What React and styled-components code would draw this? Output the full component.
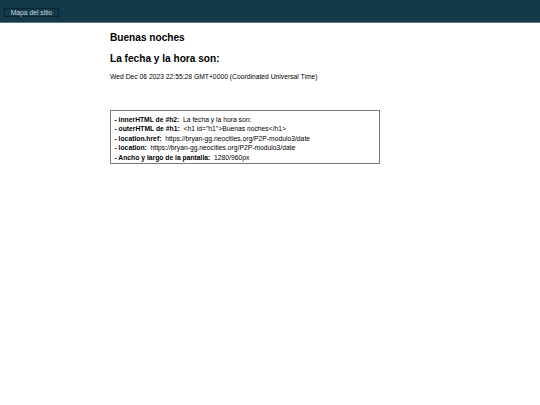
import React from 'react';
import styled, { createGlobalStyle } from 'styled-components';

const GlobalStyle = createGlobalStyle`
	html, body {
		margin: 0;
		padding: 0;
		background: #ffffff;
		font-family: 'Liberation Sans', Arial, sans-serif;
		color: #000000;
	}
`;

const Header = styled.header`
	height: 23px;
	background: #133a4b;
	border-bottom: 1px solid #5b7a85;
	display: flex;
	align-items: flex-start;
	padding: 8px 4px 0;
	box-sizing: border-box;
`;

const MapButton = styled.button`
	height: 9px;
	width: 55px;
	padding: 0;
	font-family: 'Liberation Sans', Arial, sans-serif;
	font-size: 6.75px;
	line-height: 7px;
	color: #cdd5d9;
	background: #133a4b;
	border: 1px solid #0a2430;
	border-radius: 0;
	cursor: pointer;
`;

const Main = styled.main`
	width: 320px;
	margin: 0 auto;
	padding-top: 9px;
	box-sizing: border-box;
`;

const Title = styled.h1`
	font-size: 10.125px;
	font-weight: bold;
	margin: 0;
	line-height: 12px;
`;

const Subtitle = styled.h2`
	font-size: 10.125px;
	font-weight: bold;
	margin: 8.5px 0 0;
	line-height: 12px;
`;

const DateLine = styled.p`
	font-size: 6.75px;
	margin: 8px 0 0;
	line-height: 8px;
`;

const InfoBox = styled.div`
	width: 270px;
	margin-top: 29px;
	padding: 4px 3.5px 1px;
	border: 1px solid #7a7a7a;
	box-sizing: border-box;
`;

const InfoRow = styled.div`
	font-size: 6.75px;
	line-height: 9.5px;
	white-space: nowrap;
`;

const Label = styled.strong`
	font-weight: bold;
	margin-right: 3.8px;
`;

const rows = [
	['- innerHTML de #h2:', 'La fecha y la hora son:'],
	['- outerHTML de #h1:', '<h1 id="h1">Buenas noches</h1>'],
	['- location.href:', 'https://bryan-gg.neocities.org/P2P-modulo3/date'],
	['- location:', 'https://bryan-gg.neocities.org/P2P-modulo3/date'],
	['- Ancho y largo de la pantalla:', '1280/960px']
];

export default function App() {
	return (
		<>
			<GlobalStyle />
			<Header>
				<MapButton>Mapa del sitio</MapButton>
			</Header>
			<Main>
				<Title id="h1">Buenas noches</Title>
				<Subtitle id="h2">La fecha y la hora son:</Subtitle>
				<DateLine>Wed Dec 06 2023 22:55:28 GMT+0000 (Coordinated Universal Time)</DateLine>
				<InfoBox>
					{rows.map(([label, value]) => (
						<InfoRow key={label}>
							<Label>{label}</Label>
							{value}
						</InfoRow>
					))}
				</InfoBox>
			</Main>
		</>
	);
}
